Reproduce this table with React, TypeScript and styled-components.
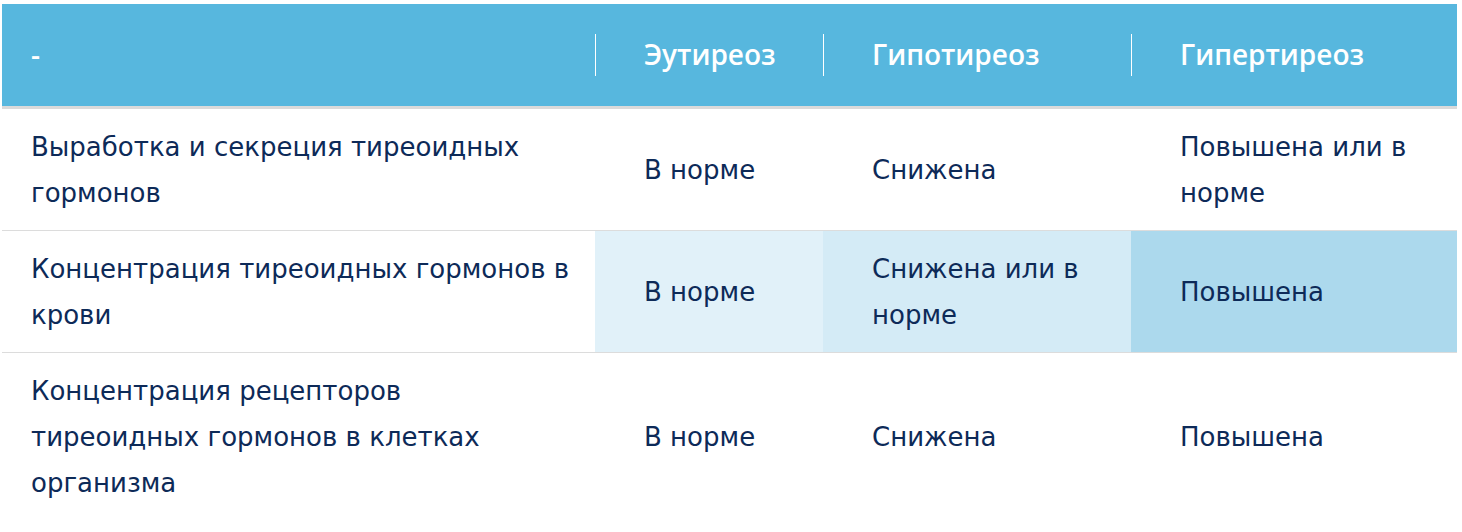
import styled, { createGlobalStyle } from "styled-components";

const GlobalStyle = createGlobalStyle`
  html, body {
    margin: 0;
    padding: 0;
    background: #ffffff;
  }
  body {
    font-family: "DejaVu Sans", "Noto Sans", sans-serif;
  }
`;

const Wrap = styled.div`
  padding: 4px 0 0 2px;
`;

const Table = styled.table`
  width: 1455px;
  border-collapse: collapse;
  table-layout: fixed;
  color: #0d2a58;
  font-size: 26px;
  line-height: 46px;
`;

const HeadRow = styled.tr`
  background: #57b7de;
  border-bottom: 3px solid #dadada;
`;

const HeadCell = styled.th<{ $first?: boolean }>`
  position: relative;
  height: 99px;
  padding: 0 20px 3px ${(p) => (p.$first ? "29px" : "49px")};
  text-align: left;
  vertical-align: middle;
  color: #ffffff;
  font-family: "Open Sans", "Noto Sans", sans-serif;
  font-size: 28px;
  font-weight: 600;

  &::before {
    content: "";
    display: ${(p) => (p.$first ? "none" : "block")};
    position: absolute;
    left: 0;
    top: 30px;
    bottom: 30px;
    width: 1px;
    background: #ffffff;
  }
`;

const Row = styled.tr`
  border-bottom: 1px solid #dcdcdc;
  &:last-child {
    border-bottom: none;
  }
`;

const Cell = styled.td<{ $first?: boolean; $tint?: string }>`
  padding: 15px 20px 14px ${(p) => (p.$first ? "29px" : "49px")};
  vertical-align: middle;
  background: ${(p) => p.$tint ?? "transparent"};
  font-weight: 400;
`;

const rows: { label: React.ReactNode; values: string[]; tints?: string[] }[] = [
  {
    label: "Выработка и секреция тиреоидных гормонов",
    values: ["В норме", "Снижена", "Повышена или в норме"],
  },
  {
    label: "Концентрация тиреоидных гормонов в крови",
    values: ["В норме", "Снижена или в норме", "Повышена"],
    tints: ["#e1f1f9", "#d4ebf6", "#acd9ed"],
  },
  {
    label: (
      <>
        Концентрация рецепторов
        <br />
        тиреоидных гормонов в клетках организма
      </>
    ),
    values: ["В норме", "Снижена", "Повышена"],
  },
];

export default function App() {
  return (
    <>
      <GlobalStyle />
      <Wrap>
        <Table>
          <colgroup>
            <col style={{ width: 593 }} />
            <col style={{ width: 228 }} />
            <col style={{ width: 308 }} />
            <col style={{ width: 326 }} />
          </colgroup>
          <thead>
            <HeadRow>
              <HeadCell $first>-</HeadCell>
              <HeadCell>Эутиреоз</HeadCell>
              <HeadCell>Гипотиреоз</HeadCell>
              <HeadCell>Гипертиреоз</HeadCell>
            </HeadRow>
          </thead>
          <tbody>
            {rows.map((r, i) => (
              <Row key={i}>
                <Cell $first>{r.label}</Cell>
                {r.values.map((v, j) => (
                  <Cell key={j} $tint={r.tints?.[j]}>
                    {v}
                  </Cell>
                ))}
              </Row>
            ))}
          </tbody>
        </Table>
      </Wrap>
    </>
  );
}
